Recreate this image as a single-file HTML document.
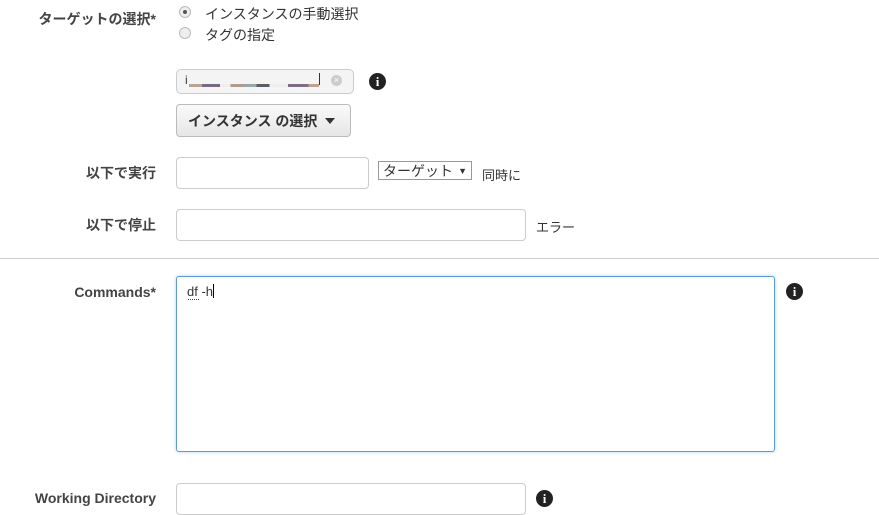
<!DOCTYPE html>
<html><head><meta charset="utf-8"><style>
body{margin:0;width:879px;height:510px;background:#fff;position:relative;overflow:hidden;font-family:"Liberation Sans","Noto Sans CJK JP",sans-serif;color:#333;font-size:13px}
.a{position:absolute}
.lbl{font-weight:bold;text-align:right;right:723px;color:#444;font-size:14px}
.inp{position:absolute;border:1px solid #ccc;border-radius:4px;background:#fff}
.radio{position:absolute;width:10px;height:10px;border-radius:50%;border:1px solid #bbb;background:#eee}
.info{position:absolute;width:17px;height:17px;border-radius:50%;background:#222;color:#fff;font:bold 13px "Liberation Serif",serif;text-align:center;line-height:17px}
</style></head><body>
<div class="a lbl" style="top:9px">ターゲットの選択*</div>
<div class="radio" style="left:179px;top:6px"><div style="width:4px;height:4px;border-radius:50%;background:#555;margin:3px"></div></div>
<div class="a" style="left:205px;top:4px;font-size:14px">インスタンスの手動選択</div>
<div class="radio" style="left:179px;top:27px"></div>
<div class="a" style="left:205px;top:25px;font-size:14px">タグの指定</div>

<div class="a" style="left:176px;top:69px;width:176px;height:23px;border:1px solid #ccc;border-radius:5px;background:#f4f4f4"></div>
<div class="a" style="left:185px;top:73px;font-size:12px">i</div>
<div class="a" style="left:189px;top:84px;width:130px;height:3px;background:linear-gradient(90deg,#b9a493 0 10%,#766b82 10% 24%,#eee 24% 32%,#b19a8e 32% 42%,#98a8a8 42% 52%,#5a5f66 52% 62%,#eee 62% 76%,#7c6e84 76% 92%,#c0a090 92%)"></div>
<div class="a" style="left:319px;top:73px;width:1px;height:12px;background:#333"></div>
<div class="a" style="left:331px;top:75px;width:11px;height:11px;border-radius:50%;background:#ccc;color:#fff;font-size:9px;text-align:center;line-height:11px">×</div>
<div class="info" style="left:369px;top:73px">i</div>

<div class="a" style="left:176px;top:104px;width:173px;height:31px;border:1px solid #bbb;border-radius:4px;background:linear-gradient(#fafafa,#e6e6e6)"></div>
<div class="a" style="left:188px;top:111px;font-size:14px;font-weight:bold">インスタンス の選択</div>
<div class="a" style="left:325px;top:118px;border-left:5px solid transparent;border-right:5px solid transparent;border-top:6px solid #333"></div>

<div class="a lbl" style="top:163px">以下で実行</div>
<div class="inp" style="left:176px;top:157px;width:191px;height:30px"></div>
<div class="a" style="left:378px;top:161px;height:19px;border:1px solid #999;background:#fff;font-size:14px;line-height:19px;padding-left:4px;box-sizing:border-box;width:94px">ターゲット<span style="font-size:9px;position:absolute;right:4px;top:0">▼</span></div>
<div class="a" style="left:482px;top:165px">同時に</div>

<div class="a lbl" style="top:215px">以下で停止</div>
<div class="inp" style="left:176px;top:209px;width:348px;height:30px"></div>
<div class="a" style="left:536px;top:217px">エラー</div>

<div class="a" style="left:0;top:258px;width:879px;height:1px;background:#ccc"></div>

<div class="a lbl" style="top:284px">Commands*</div>
<div class="a" style="left:176px;top:276px;width:597px;height:174px;border:1px solid #5b9bd5;border-radius:3px;box-shadow:0 0 3px rgba(82,168,236,.5)"></div>
<div class="a" style="left:187px;top:284px;font-size:13px">df -h<span style="display:inline-block;width:1px;height:14px;background:#000;vertical-align:-2px"></span></div>
<div class="a" style="left:188px;top:299px;width:11px;border-bottom:1px dotted #d00"></div>
<div class="info" style="left:786px;top:283px">i</div>

<div class="a lbl" style="top:490px">Working Directory</div>
<div class="inp" style="left:176px;top:483px;width:348px;height:30px"></div>
<div class="info" style="left:536px;top:490px">i</div>
</body></html>
